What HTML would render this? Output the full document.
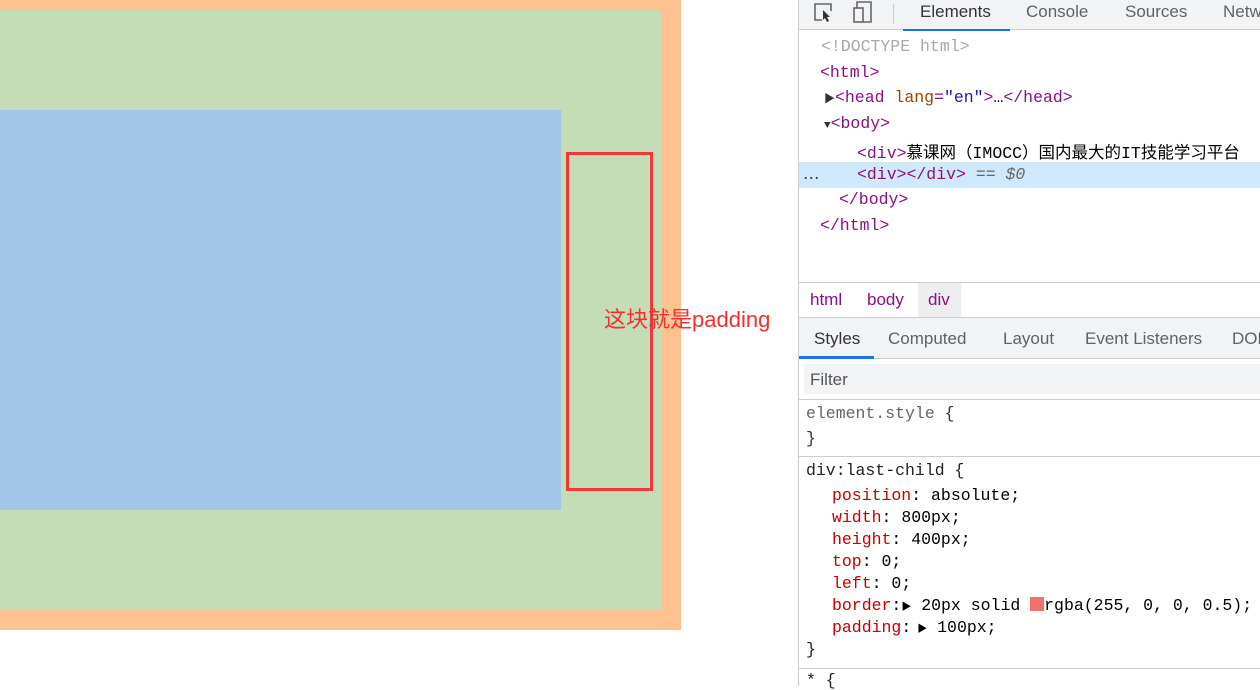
<!DOCTYPE html>
<html><head><meta charset="utf-8"><style>
*{margin:0;padding:0;box-sizing:border-box}
body{width:1260px;height:686px;overflow:hidden;background:#fff;position:relative;font-family:"Liberation Sans","Noto Sans CJK SC",sans-serif}
.a{position:absolute}
.mono{font-family:"Liberation Mono","Noto Sans CJK SC",monospace;font-size:16.5px;white-space:nowrap}
.tag{color:#881280}.attr{color:#994500}.val{color:#1a1aa6}.gr{color:#a8a8a8}
.prop{color:#c80000}
</style></head><body>
<div class="a" style="left:0;top:0;width:681px;height:630px;background:#fec190"></div>
<div class="a" style="left:0;top:10px;width:661px;height:600px;background:#c4ddb7"></div>
<div class="a" style="left:0;top:110px;width:561px;height:400px;background:#a2c5e8"></div>
<div class="a" style="left:566px;top:152px;width:87px;height:339px;border:3px solid #f23838"></div>
<div class="a" style="left:604px;top:302px;font-size:22px;color:#f23030;white-space:nowrap">这块就是padding</div>

<div class="a" style="left:798px;top:0;width:462px;height:686px;border-left:1px solid #ccc;background:#fff"></div>
<div class="a" style="left:799px;top:0;width:461px;height:30px;background:#f1f3f4;border-bottom:1px solid #ccc"></div>
<svg class="a" style="left:812px;top:1px" width="60" height="22" viewBox="0 0 60 22" fill="none" stroke="#666" stroke-width="1.6">
<path d="M10 19H3V3h16v7"/><path d="M11 9l7 7-3 0 2 4-2 1-2-4-2 2z" fill="#333" stroke="none"/>
<rect x="42" y="7" width="9" height="14"/><path d="M45 7V1h14v20h-8"/>
</svg>
<div class="a" style="left:893px;top:4px;width:1px;height:20px;background:#ccc"></div>
<div class="a" style="left:903px;top:0;width:107px;height:31px;border-bottom:2px solid #1a73e8"></div>
<div class="a" style="top:2px;left:920px;font-size:17px;color:#333">Elements</div>
<div class="a" style="top:2px;left:1026px;font-size:17px;color:#5f6368">Console</div>
<div class="a" style="top:2px;left:1125px;font-size:17px;color:#5f6368">Sources</div>
<div class="a" style="top:2px;left:1223px;font-size:17px;color:#5f6368">Network</div>

<div class="a mono gr" style="left:821px;top:37px">&lt;!DOCTYPE html&gt;</div>
<div class="a mono" style="left:820px;top:63px"><span class="tag">&lt;html&gt;</span></div>
<div class="a mono" style="left:824px;top:88px"><span style="font-size:11px;color:#333">▶</span><span class="tag">&lt;head </span><span class="attr">lang</span><span class="tag">=</span><span class="val">"en"</span><span class="tag">&gt;</span>…<span class="tag">&lt;/head&gt;</span></div>
<div class="a mono" style="left:824px;top:114px"><span style="font-size:11px;color:#333">▼</span><span class="tag">&lt;body&gt;</span></div>
<div class="a mono" style="left:857px;top:139px"><span class="tag">&lt;div&gt;</span>慕课网（IMOCC）国内最大的IT技能学习平台</div>
<div class="a" style="left:799px;top:162px;width:461px;height:26px;background:#cfe8fc"></div>
<div class="a mono" style="left:803px;top:165px;color:#333">⋯</div>
<div class="a mono" style="left:857px;top:165px"><span class="tag">&lt;div&gt;&lt;/div&gt;</span> <i style="color:#666">== $0</i></div>
<div class="a mono" style="left:839px;top:190px"><span class="tag">&lt;/body&gt;</span></div>
<div class="a mono" style="left:820px;top:216px"><span class="tag">&lt;/html&gt;</span></div>

<div class="a" style="left:799px;top:282px;width:461px;height:1px;background:#ccc"></div>
<div class="a" style="left:918px;top:283px;width:43px;height:34px;background:#eceef0"></div>
<div class="a" style="left:810px;top:290px;font-size:17px;color:#881280">html</div>
<div class="a" style="left:867px;top:290px;font-size:17px;color:#881280">body</div>
<div class="a" style="left:928px;top:290px;font-size:17px;color:#881280">div</div>
<div class="a" style="left:799px;top:317px;width:461px;height:42px;background:#f1f3f4;border-top:1px solid #ccc;border-bottom:1px solid #ccc"></div>
<div class="a" style="left:799px;top:356px;width:75px;height:3px;background:#1a73e8"></div>
<div class="a" style="left:814px;top:329px;font-size:17px;color:#333">Styles</div>
<div class="a" style="left:888px;top:329px;font-size:17px;color:#5f6368">Computed</div>
<div class="a" style="left:1003px;top:329px;font-size:17px;color:#5f6368">Layout</div>
<div class="a" style="left:1085px;top:329px;font-size:17px;color:#5f6368">Event Listeners</div>
<div class="a" style="left:1232px;top:329px;font-size:17px;color:#5f6368">DOM</div>
<div class="a" style="left:804px;top:364px;width:456px;height:30px;background:#f1f3f4"></div>
<div class="a" style="left:810px;top:370px;font-size:17px;color:#555">Filter</div>
<div class="a" style="left:799px;top:399px;width:461px;height:1px;background:#ccc"></div>
<div class="a mono" style="left:806px;top:404px;color:#666">element.style <span style="color:#333">{</span></div>
<div class="a mono" style="left:806px;top:429px;color:#333">}</div>
<div class="a" style="left:799px;top:456px;width:461px;height:1px;background:#ccc"></div>
<div class="a mono" style="left:806px;top:461px;color:#222">div:last-child {</div>
<div class="a mono" style="left:832px;top:486px"><span class="prop">position</span>: absolute;</div>
<div class="a mono" style="left:832px;top:508px"><span class="prop">width</span>: 800px;</div>
<div class="a mono" style="left:832px;top:530px"><span class="prop">height</span>: 400px;</div>
<div class="a mono" style="left:832px;top:552px"><span class="prop">top</span>: 0;</div>
<div class="a mono" style="left:832px;top:574px"><span class="prop">left</span>: 0;</div>
<div class="a mono" style="left:832px;top:596px"><span class="prop">border</span>:<span style="font-size:10px">▶</span> 20px solid <span style="display:inline-block;width:14px;height:14px;background:#f07070;vertical-align:-1px"></span>rgba(255, 0, 0, 0.5);</div>
<div class="a mono" style="left:832px;top:618px"><span class="prop">padding</span>:<span style="font-size:10px"> ▶</span> 100px;</div>
<div class="a mono" style="left:806px;top:640px;color:#222">}</div>
<div class="a" style="left:799px;top:668px;width:461px;height:1px;background:#ccc"></div>
<div class="a mono" style="left:806px;top:671px;color:#222">* {</div>
</body></html>
